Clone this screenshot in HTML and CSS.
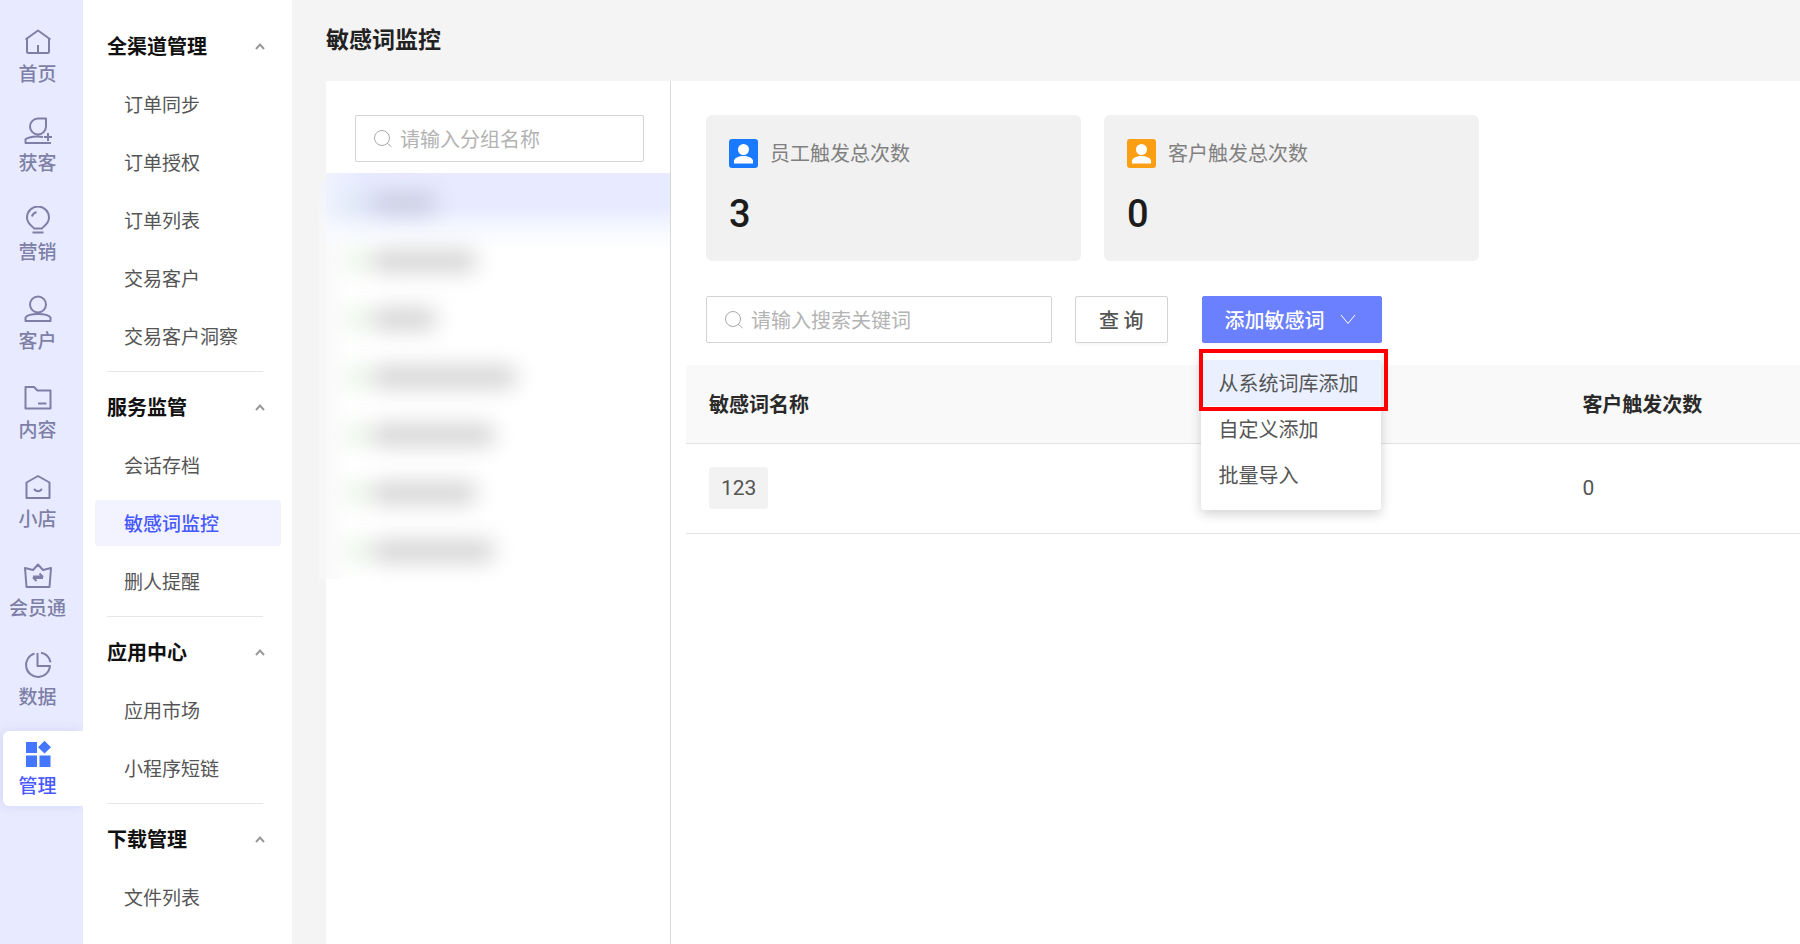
FILE: index.html
```html
<!DOCTYPE html>
<html lang="zh-CN">
<head>
<meta charset="utf-8">
<meta name="viewport" content="width=device-width, initial-scale=1">
<title>敏感词监控</title>
<link rel="stylesheet" href="styles.css">
</head>
<body>
<div class="app">
  <nav class="rail" aria-label="主导航">
    <a class="rail-item" href="#">
      <svg class="rail-icon" viewBox="0 0 28 28"><path d="M1.500 11.500 14 2.500l12.500 9M3 10.500V23.500q0 1.500 1.500 1.500h19q1.500 0 1.500-1.500V10.500M14 17V25"/></svg>
      <span>首页</span>
    </a>
    <a class="rail-item" href="#">
      <svg class="rail-icon" viewBox="0 0 28 28"><path d="M14 1.500h8v8a8 8 0 1 1-8-8zM19 20c-5-1-15-.5-17.500 2.500V26h25.500M20 20h8M24 16v8"/></svg>
      <span>获客</span>
    </a>
    <a class="rail-item" href="#">
      <svg class="rail-icon" viewBox="0 0 28 28"><path d="M10 22.500c0-1.500-7-4-7-11a11 11 0 0 1 22 0c0 7-7 9.500-7 11zM8.500 26.500h11M8 10.500q.5-3 4.500-4.500"/></svg>
      <span>营销</span>
    </a>
    <a class="rail-item" href="#">
      <svg class="rail-icon" viewBox="0 0 28 28"><circle cx="14" cy="9.500" r="8"/><path d="M1.500 26v-3.500c2-3 7.500-3.500 12.500-3.500s10.500 .5 12.500 3.500V26z"/></svg>
      <span>客户</span>
    </a>
    <a class="rail-item" href="#">
      <svg class="rail-icon" viewBox="0 0 28 28"><path d="M1.500 3h8.500l3.500 3.500H26.500V24.500h-25zM14 19.500h8.500"/></svg>
      <span>内容</span>
    </a>
    <a class="rail-item" href="#">
      <svg class="rail-icon" viewBox="0 0 28 28"><path d="M2.500 9.500 14 3l11.500 6.500V25h-23zM10 16q4 4.500 8 0"/></svg>
      <span>小店</span>
    </a>
    <a class="rail-item" href="#">
      <svg class="rail-icon" viewBox="0 0 28 28"><path d="M1 6 9 8l5-5.500L19 8l8-2-1.500 19h-23zM9 14.500h9.500l-3-3M19 16H9.500l3 3"/></svg>
      <span>会员通</span>
    </a>
    <a class="rail-item" href="#">
      <svg class="rail-icon" viewBox="0 0 28 28"><path d="M10.500 2.500a12 12 0 1 0 15.500 12.500H13.500V2M17 1.800a12 12 0 0 1 9.500 9.500"/></svg>
      <span>数据</span>
    </a>
    <a class="rail-item is-active" href="#" aria-current="page">
      <svg class="rail-icon rail-icon-solid" viewBox="0 0 28 28"><path d="M2 2h11v11H2zM20.500.8l6.500 6.400-6.500 6.400L14 7.200zM2 15.500h11V27H2zM15.500 15.500h11V27h-11z"/></svg>
      <span>管理</span>
    </a>
  </nav>

  <aside class="menu" aria-label="管理菜单">
    <section class="menu-group">
      <button class="menu-head" type="button">全渠道管理<svg class="caret" viewBox="0 0 12 8"><path d="M2 7l4-4.500L10 7"/></svg></button>
      <a class="menu-link" href="#">订单同步</a>
      <a class="menu-link" href="#">订单授权</a>
      <a class="menu-link" href="#">订单列表</a>
      <a class="menu-link" href="#">交易客户</a>
      <a class="menu-link" href="#">交易客户洞察</a>
    </section>
    <section class="menu-group">
      <button class="menu-head" type="button">服务监管<svg class="caret" viewBox="0 0 12 8"><path d="M2 7l4-4.500L10 7"/></svg></button>
      <a class="menu-link" href="#">会话存档</a>
      <a class="menu-link is-active" href="#" aria-current="page">敏感词监控</a>
      <a class="menu-link" href="#">删人提醒</a>
    </section>
    <section class="menu-group">
      <button class="menu-head" type="button">应用中心<svg class="caret" viewBox="0 0 12 8"><path d="M2 7l4-4.500L10 7"/></svg></button>
      <a class="menu-link" href="#">应用市场</a>
      <a class="menu-link" href="#">小程序短链</a>
    </section>
    <section class="menu-group">
      <button class="menu-head" type="button">下载管理<svg class="caret" viewBox="0 0 12 8"><path d="M2 7l4-4.500L10 7"/></svg></button>
      <a class="menu-link" href="#">文件列表</a>
    </section>
  </aside>

  <main class="main">
    <h1 class="title">敏感词监控</h1>
    <div class="content">
      <section class="groups">
        <label class="field group-search">
          <svg class="search-icon" viewBox="0 0 20 20"><circle cx="9" cy="9" r="7.500"/><path d="M14 14l4.500 4"/></svg>
          <input type="text" placeholder="请输入分组名称" aria-label="请输入分组名称">
        </label>
        <ul class="group-list">
          <li class="group-row is-active"><i class="smear smear-xs"></i></li>
          <li class="group-row"><i class="smear smear-md"></i></li>
          <li class="group-row"><i class="smear smear-xs"></i></li>
          <li class="group-row"><i class="smear smear-xl"></i></li>
          <li class="group-row"><i class="smear smear-lg"></i></li>
          <li class="group-row"><i class="smear smear-md"></i></li>
          <li class="group-row"><i class="smear smear-lg"></i></li>
        </ul>
      </section>

      <section class="words">
        <div class="stats">
          <div class="stat">
            <div class="stat-head">
              <svg class="badge badge-blue" viewBox="0 0 29 29"><circle cx="14.500" cy="10.500" r="5.500"/><path d="M5 24.500v-3c1-3 5-4.500 9.500-4.500s8.500 1.500 9.500 4.500v3z"/></svg>
              <span>员工触发总次数</span>
            </div>
            <strong class="stat-value">3</strong>
          </div>
          <div class="stat">
            <div class="stat-head">
              <svg class="badge badge-orange" viewBox="0 0 29 29"><circle cx="14.500" cy="10.500" r="5.500"/><path d="M5 24.500v-3c1-3 5-4.500 9.500-4.500s8.500 1.500 9.500 4.500v3z"/></svg>
              <span>客户触发总次数</span>
            </div>
            <strong class="stat-value">0</strong>
          </div>
        </div>

        <div class="toolbar">
          <label class="field word-search">
            <svg class="search-icon" viewBox="0 0 20 20"><circle cx="9" cy="9" r="7.500"/><path d="M14 14l4.500 4"/></svg>
            <input type="text" placeholder="请输入搜索关键词" aria-label="请输入搜索关键词">
          </label>
          <button class="btn" type="button">查 询</button>
          <div class="dropdown">
            <button class="btn btn-primary" type="button" aria-haspopup="menu" aria-expanded="true">添加敏感词<svg class="arrow" viewBox="0 0 16 12"><path d="M1 1l7 8.500L15 1"/></svg></button>
            <div class="dropdown-menu" role="menu">
              <button class="option is-active" type="button" role="menuitem">从系统词库添加</button>
              <button class="option" type="button" role="menuitem">自定义添加</button>
              <button class="option" type="button" role="menuitem">批量导入</button>
            </div>
          </div>
        </div>

        <table class="table">
          <thead>
            <tr><th class="col-name" scope="col">敏感词名称</th><th scope="col">客户触发次数</th></tr>
          </thead>
          <tbody>
            <tr><td><span class="tag">123</span></td><td>0</td></tr>
          </tbody>
        </table>
      </section>
    </div>
  </main>
</div>
</body>
</html>
```

FILE: styles.css
```css
* { box-sizing: border-box; }

body {
  margin: 0;
  background: #f4f4f4;
  color: #555;
  font: 20px/30px "Noto Sans CJK SC", sans-serif;
}

button, input { font: inherit; color: inherit; }
button { cursor: pointer; }
a { color: inherit; text-decoration: none; }
svg { flex: none; fill: none; stroke: currentColor; }

.app { display: flex; min-height: 100vh; }

/* Icon rail */
.rail {
  flex: none;
  display: flex;
  flex-direction: column;
  gap: 14px;
  width: 83px;
  padding: 19px 0 14px 3px;
  background: #e8ebff;
  color: #7e7fa6;
}
.rail-item {
  position: relative;
  display: flex;
  flex-direction: column;
  align-items: center;
  height: 75px;
  padding: 9px 11px 0 0;
  border-radius: 6px 0 0 6px;
  font-size: 19px;
  font-weight: 500;
  line-height: 34px;
}
.rail-icon { width: 28px; height: 28px; stroke-width: 2; stroke-linejoin: round; }
.rail-icon-solid { fill: #4476ff; stroke: none; }
.rail-item.is-active {
  background: #fff;
  color: #4859ff;
  box-shadow: -2px 0 12px rgba(90, 90, 180, .14);
  clip-path: inset(-12px 0 -12px -12px);
}

/* Section menu */
.menu {
  flex: none;
  display: flex;
  flex-direction: column;
  gap: 12px;
  width: 209px;
  padding: 23px 11px 23px 12px;
  background: #fff;
}
.menu-group { display: flex; flex-direction: column; gap: 12px; }
.menu-group:not(:last-child)::after {
  content: "";
  height: 1px;
  margin: 0 18px 0 12px;
  background: #e6e6e6;
}
.menu-head {
  display: flex;
  align-items: center;
  justify-content: space-between;
  height: 46px;
  padding: 0 15px 0 12px;
  border: 0;
  background: none;
  color: #111;
  font-weight: 700;
}
.caret { width: 12px; height: 8px; color: #999; stroke-width: 2; }
.menu-link {
  padding: 0 29px;
  border-radius: 3px;
  font-size: 19px;
  line-height: 46px;
  white-space: nowrap;
}
.menu-link.is-active { background: #f2f3ff; color: #4859ff; font-weight: 500; }

/* Main area */
.main { flex: 1; min-width: 0; display: flex; flex-direction: column; padding-left: 34px; }
.title { margin: 0; padding: 20px 0 25px; color: #222; font-size: 23px; line-height: 36px; font-weight: 700; }
.content { flex: 1; display: flex; background: #fff; }

.field {
  display: flex;
  align-items: center;
  gap: 7px;
  height: 47px;
  padding: 0 17px;
  border: 1px solid #d3d3d3;
  border-radius: 2px;
  background: #fff;
}
.field input { flex: 1; min-width: 0; padding: 0; border: 0; outline: 0; background: none; }
.field input::placeholder { color: #b3b3b3; opacity: 1; }
.search-icon { width: 20px; height: 20px; color: #aaa; stroke-width: 1; }

.groups { flex: none; width: 345px; border-right: 1px solid #d9d9d9; }
.group-search { margin: 34px 26px 11px 29px; }
.group-list { position: relative; margin: 0; padding: 0; list-style: none; }
/* Soft edge of the obscured list, spilling over the panel's left side */
.group-list::before {
  content: "";
  position: absolute;
  inset: 10px auto 0 -7px;
  width: 7px;
  background: linear-gradient(#f2f4fb, #f8f8f8 60px);
}
.group-row {
  display: flex;
  align-items: center;
  height: 58px;
  padding: 2px 0 0 46px;
  background: linear-gradient(90deg, #f9f9f9, #fff 24px);
}
.group-row.is-active {
  background:
    linear-gradient(transparent 60%, #f7f9ff),
    linear-gradient(90deg, #eff3fd, #e8ebff 40px);
}
.group-row.is-active + .group-row {
  background:
    linear-gradient(#f7f9ff, transparent 18px),
    linear-gradient(90deg, #f9f9f9, #fff 24px);
}
.smear {
  position: relative;
  height: 20px;
  border-radius: 6px;
  background: #cfcfcf;
  filter: blur(11px);
}
.smear::before {
  content: "";
  position: absolute;
  left: -24px;
  width: 16px;
  height: 20px;
  background: #dff2dc;
}
.is-active .smear { background: #c6cadc; }
.is-active .smear::before { background: #d4e6ee; }
.smear-xs { width: 64px; }
.smear-md { width: 104px; }
.smear-lg { width: 122px; }
.smear-xl { width: 144px; }

/* Words panel */
.words { flex: 1; min-width: 0; padding: 34px 0 0 15px; }
.stats { display: flex; gap: 23px; padding: 0 20px; }
.stat { flex: 0 1 375px; height: 146px; padding: 23px; border-radius: 6px; background: #f1f1f1; }
.stat-head { display: flex; align-items: center; gap: 12px; color: #808080; }
.badge { width: 29px; height: 29px; border-radius: 3px; fill: #fff; stroke: none; }
.badge-blue { background: #1a7aff; }
.badge-orange { background: #fa9f14; }
.stat-value {
  display: block;
  margin-top: 24px;
  color: #1c1c1c;
  font: 500 38px/44px Roboto, sans-serif;
}

.toolbar { display: flex; padding: 35px 20px 22px; }
.word-search { flex: 0 1 346px; }
.btn {
  height: 47px;
  margin-left: 23px;
  padding: 0 23px;
  border: 1px solid #d3d3d3;
  border-radius: 2px;
  background: #fff;
  box-shadow: 0 2px 2px rgba(0, 0, 0, .03);
  font-weight: 500;
}
.dropdown { position: relative; margin-left: 34px; }
.btn-primary {
  display: flex;
  align-items: center;
  gap: 15px;
  margin: 0;
  padding: 0 25px 0 22px;
  border-color: #6b80ff;
  background: #6b80ff;
  color: #fff;
}
.arrow { width: 16px; height: 12px; stroke-width: 1; }
.dropdown-menu {
  position: absolute;
  top: 100%;
  left: -1px;
  z-index: 1;
  width: 100%;
  margin-top: 9px;
  padding: 8px 0 12px;
  border-radius: 3px;
  background: #fff;
  box-shadow: 0 4px 12px rgba(0, 0, 0, .18);
}
.option {
  position: relative;
  display: block;
  width: 100%;
  height: 46px;
  padding: 0 18px;
  border: 0;
  background: none;
  text-align: left;
  white-space: nowrap;
}
.option.is-active { background: #eaf0ff; }
/* Red highlight around the first option */
.option.is-active::after {
  content: "";
  position: absolute;
  inset: -11px -7px -5px -2px;
  border: 4px solid #f00;
}

.table { width: 100%; border-collapse: collapse; table-layout: fixed; }
.table th, .table td { padding: 0 23px; border-bottom: 1px solid #e3e3e3; text-align: left; }
.table th { height: 78px; background: #f9f9f9; color: #2a2a2a; font-weight: 700; }
.table td { height: 90px; font-family: Roboto, sans-serif; font-size: 21px; }
.col-name { width: 78.4%; }
.tag {
  display: inline-block;
  padding: 0 12px;
  border-radius: 3px;
  background: #f2f2f2;
  line-height: 42px;
}
```
